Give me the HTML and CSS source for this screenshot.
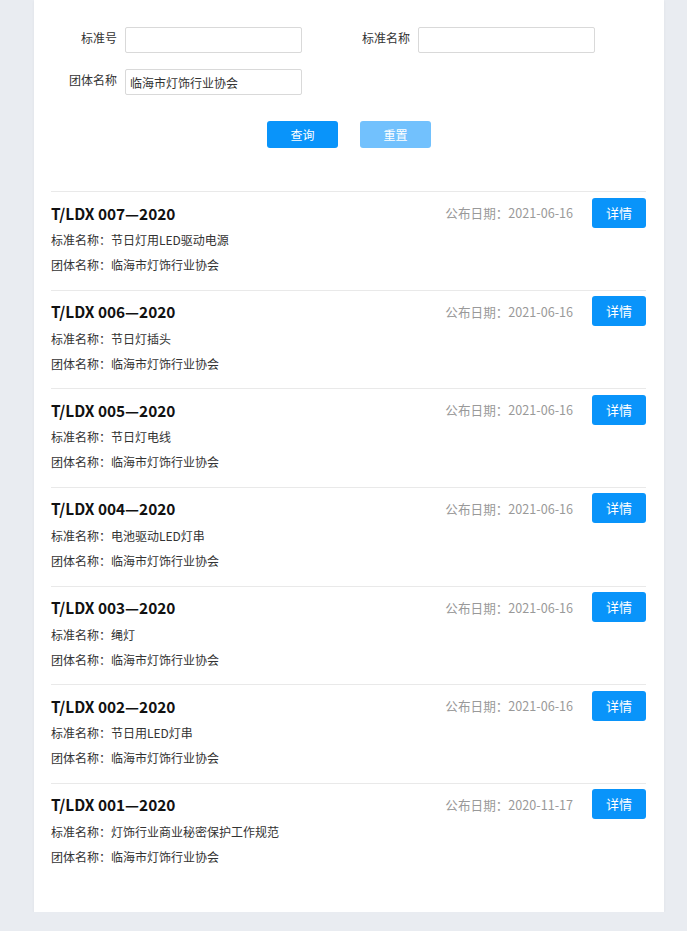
FILE: index.html
```html
<!DOCTYPE html>
<html>
	<head>
		<meta charset = 'UTF-8' />
		<meta name = 'viewport' content='width=device-width, initial-scale=1'>
		<title> 团体标准 </title>
		<link rel="stylesheet" href="styles.css">
	</head>
	<body>
		<div class='mainpage'>
			<div class='searchform'>
				<div class='formitem'>
					<label class='formlabel'>标准号</label>
					<input type='text' class='forminput'/>
				</div>
				<div class='formitem'>
					<label class='formlabel'>标准名称</label>
					<input type='text' class='forminput'/>
				</div>
				<div class='formitem'>
					<label class='formlabel'>团体名称</label>
					<input type='text' class='forminput' value='临海市灯饰行业协会'/>
				</div>
			</div>

			<div class='btnarea'>
				<a href="#" class='btn btn-search'>查询</a>
				<a href="#" class='btn btn-reset'>重置</a>
			</div>

			<div class='stdlist'>
				<div class='stditem'>
					<div class='stdhead'>
						<span class='stdcode'>T/LDX 007—2020</span>
						<span class='stddate'>公布日期：2021-06-16</span>
						<a href="#" class='btn-detail'>详情</a>
					</div>
					<div class='stdline'>标准名称：节日灯用LED驱动电源</div>
					<div class='stdline'>团体名称：临海市灯饰行业协会</div>
				</div>
				<div class='stditem'>
					<div class='stdhead'>
						<span class='stdcode'>T/LDX 006—2020</span>
						<span class='stddate'>公布日期：2021-06-16</span>
						<a href="#" class='btn-detail'>详情</a>
					</div>
					<div class='stdline'>标准名称：节日灯插头</div>
					<div class='stdline'>团体名称：临海市灯饰行业协会</div>
				</div>
				<div class='stditem'>
					<div class='stdhead'>
						<span class='stdcode'>T/LDX 005—2020</span>
						<span class='stddate'>公布日期：2021-06-16</span>
						<a href="#" class='btn-detail'>详情</a>
					</div>
					<div class='stdline'>标准名称：节日灯电线</div>
					<div class='stdline'>团体名称：临海市灯饰行业协会</div>
				</div>
				<div class='stditem'>
					<div class='stdhead'>
						<span class='stdcode'>T/LDX 004—2020</span>
						<span class='stddate'>公布日期：2021-06-16</span>
						<a href="#" class='btn-detail'>详情</a>
					</div>
					<div class='stdline'>标准名称：电池驱动LED灯串</div>
					<div class='stdline'>团体名称：临海市灯饰行业协会</div>
				</div>
				<div class='stditem'>
					<div class='stdhead'>
						<span class='stdcode'>T/LDX 003—2020</span>
						<span class='stddate'>公布日期：2021-06-16</span>
						<a href="#" class='btn-detail'>详情</a>
					</div>
					<div class='stdline'>标准名称：绳灯</div>
					<div class='stdline'>团体名称：临海市灯饰行业协会</div>
				</div>
				<div class='stditem'>
					<div class='stdhead'>
						<span class='stdcode'>T/LDX 002—2020</span>
						<span class='stddate'>公布日期：2021-06-16</span>
						<a href="#" class='btn-detail'>详情</a>
					</div>
					<div class='stdline'>标准名称：节日用LED灯串</div>
					<div class='stdline'>团体名称：临海市灯饰行业协会</div>
				</div>
				<div class='stditem'>
					<div class='stdhead'>
						<span class='stdcode'>T/LDX 001—2020</span>
						<span class='stddate'>公布日期：2020-11-17</span>
						<a href="#" class='btn-detail'>详情</a>
					</div>
					<div class='stdline'>标准名称：灯饰行业商业秘密保护工作规范</div>
					<div class='stdline'>团体名称：临海市灯饰行业协会</div>
				</div>
			</div>
		</div>
	</body>
</html>
```

FILE: styles.css
```css
*{
    box-sizing: border-box;
}

body{
    margin: 0;
    background-color: #e9ecf1;
    font-family: "Noto Sans CJK SC", "Microsoft YaHei", sans-serif;
    font-size: 12px;
    color: #333;
}

.mainpage{
    width: 630px;
    margin-left: 34px;
    background-color: white;
    padding: 27px 18px 30px 17px;
    box-shadow: 0 1px 3px rgba(0, 0, 0, 0.05);
}

.searchform{
    display: grid;
    grid-template-columns: 251px 251px;
    column-gap: 42px;
    row-gap: 16px;
}

.formitem{
    display: flex;
    gap: 8px;
}

.formlabel{
    width: 66px;
    text-align: right;
    line-height: 22px;
}

.forminput{
    width: 177px;
    height: 26px;
    border: 1px solid #d9d9d9;
    border-radius: 2px;
    padding: 0 4px;
    font-family: inherit;
    font-size: 12px;
    color: #333;
    outline: none;
}

.btnarea{
    display: flex;
    justify-content: center;
    gap: 22px;
    margin-top: 26px;
    padding-left: 1px;
}

.btn{
    width: 71px;
    height: 27px;
    line-height: 27px;
    border-radius: 3px;
    color: white;
    text-align: center;
    text-decoration: none;
}

.btn-search{
    background-color: #0994fa;
}

.btn-reset{
    background-color: #72c1fd;
}

.stdlist{
    margin-top: 43px;
}

.stditem{
    border-top: 1px solid #e9e9e9;
    padding: 6px 0 12.67px;
}

.stdhead{
    display: flex;
    align-items: center;
    height: 29px;
}

.stdcode{
    flex: 1;
    font-size: 15.4px;
    font-weight: bold;
    color: #111;
}

.stddate{
    color: #999;
    font-size: 12.6px;
    margin-right: 19px;
}

.btn-detail{
    width: 54px;
    height: 30px;
    line-height: 30px;
    background-color: #0994fa;
    color: white;
    font-size: 13px;
    border-radius: 3px;
    text-align: center;
    text-decoration: none;
}

.stdline{
    line-height: 25px;
}
```
